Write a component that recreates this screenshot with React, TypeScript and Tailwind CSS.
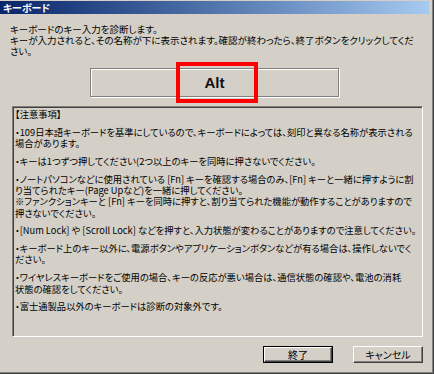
import React from 'react';

// Notes shown inside the sunken box, one entry per paragraph, one string per line
const notes: string[][] = [
  [
    '・109日本語キーボードを基準にしているので、キーボードによっては、刻印と異なる名称が表示される',
    '場合があります。',
  ],
  ['・キーは1つずつ押してください(2つ以上のキーを同時に押さないでください。'],
  [
    '・ノートパソコンなどに使用されている [Fn] キーを確認する場合のみ、[Fn] キーと一緒に押すように割',
    'り当てられたキー(Page Upなど)を一緒に押してください。',
    '※ファンクションキーと [Fn] キーを同時に押すと、割り当てられた機能が動作することがありますので',
    '押さないでください。',
  ],
  ['・[Num Lock] や [Scroll Lock] などを押すと、入力状態が変わることがありますので注意してください。'],
  [
    '・キーボード上のキー以外に、電源ボタンやアプリケーションボタンなどが有る場合は、操作しないでく',
    'ださい。',
  ],
  [
    '・ワイヤレスキーボードをご使用の場合、キーの反応が悪い場合は、通信状態の確認や、電池の消耗',
    '状態の確認をしてください。',
  ],
  ['・富士通製品以外のキーボードは診断の対象外です。'],
];

const Button: React.FC<{ label: string; isDefault?: boolean }> = ({ label, isDefault }) => (
  <div className={isDefault ? 'border border-black' : ''}>
    <div
      className={
        'flex items-center justify-center border border-t-white border-l-white border-r-[#404040] border-b-[#404040] shadow-[inset_-1px_-1px_0_#808080] text-[10px] leading-none ' +
        (isDefault ? 'w-[68px] h-[15px]' : 'w-[70px] h-[17px]')
      }
    >
      {label}
    </div>
  </div>
);

const App: React.FC = () => {
  return (
    <div className="w-[434px] h-[374px] bg-[#d4d0c8] border-r border-b border-[#404040] text-black font-['Noto_Sans_CJK_JP',sans-serif] [font-feature-settings:'palt']">
      <div className="h-full border-r border-b border-[#808080] pt-[1px] pr-[3px]">
        {/* Title bar */}
        <div className="h-[13px] bg-gradient-to-r from-[#0a246a] to-[#a6caf0] flex items-center pl-[3px]">
          <span className="text-white font-bold text-[10px] leading-none">キーボード</span>
        </div>

        {/* Description */}
        <div className="ml-[10px] mt-[10px] text-[9.5px] leading-[11px] whitespace-nowrap">
          <div>キーボードのキー入力を診断します。</div>
          <div>キーが入力されると、その名称が下に表示されます。確認が終わったら、終了ボタンをクリックしてくだ</div>
          <div>さい。</div>
        </div>

        {/* Key display */}
        <div className="relative ml-[90px] mt-[11px] w-[249px] h-[29px] border border-[#808080] shadow-[inset_1px_1px_0_#fff,1px_1px_0_#fff] flex items-center justify-center">
          <span className="font-['Liberation_Sans',Arial,sans-serif] font-bold text-[15px] leading-none text-[#111]">Alt</span>
          <div className="absolute left-[85px] top-[-7px] w-[82px] h-[41px] border-4 border-[#ff0000]" />
        </div>

        {/* Notes */}
        <div className="ml-[12px] mt-[9px] w-[411px] h-[231px] border border-t-[#808080] border-l-[#808080] border-r-white border-b-white shadow-[inset_1px_1px_0_#404040] pl-[2px] pt-[2px] text-[9.3px] leading-[11.3px] whitespace-nowrap overflow-hidden">
          <div>【注意事項】</div>
          {notes.map((para, i) => (
            <div key={i} className="mt-[6.5px]">
              {para.map((line, j) => (
                <div key={j}>{line}</div>
              ))}
            </div>
          ))}
        </div>

        {/* Buttons */}
        <div className="ml-[12px] mt-[9px] w-[411px] flex justify-end gap-[20px]">
          <Button label="終了" isDefault />
          <Button label="キャンセル" />
        </div>
      </div>
    </div>
  );
};

export default App;
